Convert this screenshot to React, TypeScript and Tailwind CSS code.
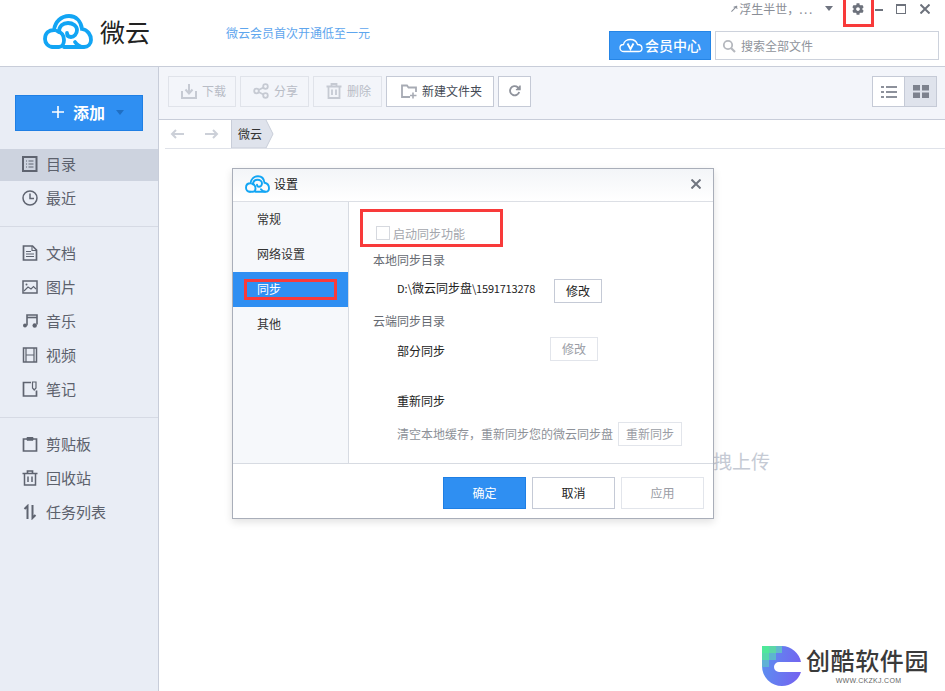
import React from "react";
import { FaCog } from "react-icons/fa";

function CloudLogo({ className, color = "#12a5f4" }: { className?: string; color?: string }) {
  return (
    <svg viewBox="0 0 50 35" className={className} fill="none" stroke={color} strokeWidth="3.8" strokeLinecap="round">
      <path d="M10 33C5 33 2 29 2 25C2 19 6 16 11 16C12 8 18 2 26 2C33 2 38 7 39 15C45 16 48 21 48 26C48 30 45 33 41 33C37 33 34 31 32 28" />
      <path d="M10 33H16C19 33 21 30 21 26C21 21 18 18 14 17" />
      <path d="M16 18C16 12 20 9 25 9C30 9 34 12 34 16C34 20 31 23 28 23C25 23 24 21 24 19" />
      <path d="M21 33H40" />
    </svg>
  );
}

function Glyph({ children, className = "w-4 h-4" }: { children: React.ReactNode; className?: string }) {
  return (
    <svg viewBox="0 0 16 16" className={className} fill="none" stroke="currentColor" strokeWidth="1.5">
      {children}
    </svg>
  );
}

const navIcons: Record<string, React.ReactNode> = {
  目录: (
    <Glyph>
      <rect x="1" y="1" width="13.5" height="14" strokeWidth="2" />
      <path d="M4 5h1M4 8h1M4 11h1M6.5 5h5M6.5 8h5M6.5 11h5" strokeWidth="1" />
    </Glyph>
  ),
  最近: (
    <Glyph>
      <circle cx="8" cy="8" r="7" />
      <path d="M8 3.5V8.5H12" />
    </Glyph>
  ),
  文档: (
    <Glyph>
      <path d="M1.5 1H10.5L14.5 5V15H1.5Z" strokeWidth="1.7" />
      <path d="M10 1V5.5H14.5M4 6.5h5M4 9h8M4 11.5h8" strokeWidth="1.1" />
    </Glyph>
  ),
  图片: (
    <Glyph>
      <rect x="1" y="2" width="14" height="12" />
      <circle cx="4.5" cy="5.5" r="1" fill="currentColor" stroke="none" />
      <path d="M2 12L6 8L9 10L11.5 7.5L14 10" strokeWidth="1.1" />
    </Glyph>
  ),
  音乐: (
    <Glyph>
      <path d="M5 12.5V2H15V11.5" strokeWidth="1.6" />
      <path d="M5 4.5H15" strokeWidth="1.6" />
      <circle cx="3" cy="12.5" r="2" fill="currentColor" stroke="none" />
      <circle cx="12.7" cy="12.5" r="2.2" fill="currentColor" stroke="none" />
    </Glyph>
  ),
  视频: (
    <Glyph>
      <rect x="1.5" y="1" width="13" height="14" />
      <path d="M4 1V15M12 1V15M4 8H12" strokeWidth="1.2" />
    </Glyph>
  ),
  笔记: (
    <Glyph>
      <path d="M9 1.5H1.5V15H14.5V9.5" strokeWidth="1.7" />
      <path d="M10.5 1H14V7L12.2 9L10.5 7Z" strokeWidth="1.2" />
    </Glyph>
  ),
  剪贴板: (
    <Glyph>
      <path d="M5 3H1.5V15H14.5V3H11" strokeWidth="1.7" />
      <path d="M5 4.2V1.5H11V4.2Z" fill="currentColor" strokeWidth="1" />
    </Glyph>
  ),
  回收站: (
    <Glyph>
      <path d="M0.5 3.5H15.5M5.5 3V1H10.5V3" strokeWidth="1.7" />
      <path d="M2.5 3.5V15H13.5V3.5M6 6.5V12M10 6.5V12" strokeWidth="1.5" />
    </Glyph>
  ),
  任务列表: (
    <Glyph>
      <path d="M5.5 15V2L2.5 5" strokeWidth="2" />
      <path d="M10.5 1V14L13.5 11" strokeWidth="2" />
    </Glyph>
  ),
};

function NavItem({ label, active }: { label: string; active?: boolean }) {
  return (
    <div className={`flex items-center pl-[22px] gap-[8px] text-[15px] text-[#5c616c] ${active ? "h-[32px] pb-[2px] bg-[#cdd3df]" : "h-[34px]"}`}>
      <span className="text-[#5f6470]">{navIcons[label]}</span>
      <span>{label}</span>
    </div>
  );
}

function ToolButton({ label, icon, width, enabled }: { label?: string; icon: React.ReactNode; width: string; enabled?: boolean }) {
  return (
    <div
      className={`${width} h-[31px] pb-[2px] flex items-center gap-[5px] text-[12px] border ${label ? "" : "justify-center"} ${
        enabled ? "bg-white border-[#c5cad6] text-[#444a55]" : "border-[#e0e3ea] text-[#b8bcc6]"
      }`}
    >
      {icon}
      {label && <span>{label}</span>}
    </div>
  );
}

function DialogButton({ children, kind, className = "" }: { children: React.ReactNode; kind: "primary" | "normal" | "disabled"; className?: string }) {
  const look = {
    primary: "bg-[#2f8ff2] border-[#1f7fe4] text-white",
    normal: "bg-white border-[#c5cad6] text-[#222222]",
    disabled: "bg-white border-[#e2e5eb] text-[#9a9da5]",
  }[kind];
  return <div className={`flex items-center justify-center border text-[12px] ${look} ${className}`}>{children}</div>;
}

function RedBox({ className }: { className: string }) {
  return <div className={`absolute border-[3px] border-[#f83a3a] pointer-events-none ${className}`} />;
}

export default function App() {
  return (
    <div className="relative w-screen h-screen overflow-hidden bg-white flex flex-col font-['Noto_Sans_CJK_SC','Noto_Sans',sans-serif]">
      {/* header */}
      <header className="h-[67px] shrink-0 flex border-b border-[#c8cdd9] pl-[43px] pr-[6px]">
        <div className="flex items-start pt-[14px]">
          <CloudLogo className="w-[50px] h-[35px]" />
          <span className="ml-[7px] -mt-[1px] text-[25px] leading-[37px] text-[#222222]">微云</span>
          <span className="ml-[76px] mt-[10px] text-[12px] leading-[18px] text-[#5ea6ee]">微云会员首次开通低至一元</span>
        </div>
        <div className="ml-auto w-[330px] flex flex-col">
          <div className="h-[31px] flex items-start justify-end pt-[3px] text-[#777c86]">
            <div className="h-[11px] flex items-center">
              <svg viewBox="0 0 8 8" className="w-[7px] h-[7px] mr-[1px]" fill="none" stroke="#8a8f99" strokeWidth="1.2">
                <path d="M0.5 7.5L7 1M3 2.5L6 1.5L7 4.5" />
              </svg>
              <span className="text-[12px] text-[#8a8e96] whitespace-nowrap">
                浮生半世，<span className="tracking-[1.6px]">...</span>
              </span>
              <svg viewBox="0 0 8 5" className="w-[8px] h-[5px] ml-[11px]" fill="#6f7480">
                <path d="M0 0H8L4 5Z" />
              </svg>
              <FaCog className="w-[12px] h-[12px] ml-[19px] text-[#6d727c]" />
              <div className="w-[8px] h-[2px] ml-[11px] mt-[2px] bg-[#6d727c]" />
              <div className="w-[10px] h-[10px] ml-[13px] border border-t-2 border-[#6d727c]" />
              <svg viewBox="0 0 10 10" className="w-[10px] h-[10px] ml-[14px] mr-[9px]" stroke="#6d727c" strokeWidth="2">
                <path d="M0.5 0.5L9.5 9.5M9.5 0.5L0.5 9.5" />
              </svg>
            </div>
          </div>
          <div className="flex gap-[4px]">
            <div className="w-[102px] h-[29px] flex items-center justify-center gap-[2px] bg-[#3a97f5] border border-[#2585e6] text-white text-[14px] font-medium">
              <svg viewBox="0 0 24 15" className="w-[24px] h-[15px]" fill="none" stroke="white" strokeWidth="1.3">
                <path d="M5 13.5C2.5 13.5 1 12 1 10C1 8 2.5 6.5 4.5 6.5C5 3.5 8 1.5 11.5 1.5C15 1.5 17.5 3.5 18.5 6.5C21 6.5 23 8 23 10.5C23 12.5 21.5 13.5 19.5 13.5Z" />
                <path d="M8.5 5.5L11.5 11L14.5 5.5" strokeWidth="1.8" />
              </svg>
              <span>会员中心</span>
            </div>
            <div className="w-[224px] h-[29px] flex items-center border border-[#cdd2dc] pl-[6px] gap-[5px] bg-white text-[12px] text-[#8f939b]">
              <svg viewBox="0 0 14 14" className="w-[14px] h-[14px]" fill="none" stroke="#b5b8be" strokeWidth="1.8">
                <circle cx="6" cy="6" r="4.2" />
                <path d="M9 9L13 13" strokeWidth="2.2" />
              </svg>
              <span>搜索全部文件</span>
            </div>
          </div>
        </div>
      </header>

      <div className="flex-1 flex min-h-0">
        {/* sidebar */}
        <aside className="w-[159px] shrink-0 bg-[#e9edf5] border-r border-[#c8cdd9] pt-[28px]">
          <div className="mx-[15px] w-[128px] h-[36px] pb-[2px] flex items-center bg-[#2f8ff2] border border-[#1f7fe4] text-white pl-[36px]">
            <svg viewBox="0 0 12 12" className="w-[12px] h-[12px]" stroke="white" strokeWidth="1.6">
              <path d="M6 0V12M0 6H12" />
            </svg>
            <span className="ml-[9px] text-[16px] font-bold leading-none">添加</span>
            <svg viewBox="0 0 8 5" className="w-[8px] h-[5px] ml-[11px]" fill="#1f6fc4">
              <path d="M0 0H8L4 5Z" />
            </svg>
          </div>
          <div className="mt-[18px]">
            <NavItem label="目录" active />
            <NavItem label="最近" />
          </div>
          <div className="mt-[11px] mb-[9px] h-px bg-[#d6dae4]" />
          <NavItem label="文档" />
          <NavItem label="图片" />
          <NavItem label="音乐" />
          <NavItem label="视频" />
          <NavItem label="笔记" />
          <div className="mt-[11px] mb-[9px] h-px bg-[#d6dae4]" />
          <NavItem label="剪贴板" />
          <NavItem label="回收站" />
          <NavItem label="任务列表" />
        </aside>

        {/* main */}
        <main className="flex-1 flex flex-col min-w-0">
          <div className="h-[53px] shrink-0 bg-[#f3f5fa] border-b border-[#c8cdd9] flex items-start pt-[9px] pl-[9px] pr-[8px] gap-[4px]">
            <ToolButton
              width="w-[68px] pl-[12px]"
              label="下载"
              icon={
                <svg viewBox="0 0 16 16" className="w-[16px] h-[16px]" fill="none" stroke="#c6cad3" strokeWidth="2">
                  <path d="M1 8V15H15V8" />
                  <path d="M8 1V10M4.5 6.5L8 10.5L11.5 6.5" />
                </svg>
              }
            />
            <ToolButton
              width="w-[69px] pl-[12px]"
              label="分享"
              icon={
                <svg viewBox="0 0 16 16" className="w-[16px] h-[16px]" fill="none" stroke="#c6cad3" strokeWidth="1.8">
                  <circle cx="3.5" cy="8" r="2.3" />
                  <circle cx="12.5" cy="3.5" r="2.3" />
                  <circle cx="12.5" cy="12.5" r="2.3" />
                  <path d="M5.5 7L10.5 4.5M5.5 9L10.5 11.5" />
                </svg>
              }
            />
            <ToolButton
              width="w-[69px] pl-[12px]"
              label="删除"
              icon={
                <svg viewBox="0 0 16 16" className="w-[16px] h-[16px]" fill="none" stroke="#c6cad3" strokeWidth="1.8">
                  <path d="M0.5 3.5H15.5M5.5 3V1H10.5V3" />
                  <path d="M2.5 3.5V15H13.5V3.5M6 6.5V12M10 6.5V12" />
                </svg>
              }
            />
            <ToolButton
              enabled
              width="w-[108px] pl-[14px]"
              label="新建文件夹"
              icon={
                <svg viewBox="0 0 16 16" className="w-[16px] h-[16px]" fill="none" stroke="#a7abb4" strokeWidth="1.8">
                  <path d="M9 14H1V2.5H6L7.5 4.5H15V9" />
                  <path d="M12 9.5V15.5M9 12.5H15.5" strokeWidth="1.6" />
                </svg>
              }
            />
            <ToolButton
              enabled
              width="w-[33px]"
              icon={
                <svg viewBox="0 0 14 14" className="w-[13px] h-[13px]" fill="none" stroke="#8f939c" strokeWidth="2">
                  <path d="M12 8.5A5 5 0 1 1 10.5 3.5L12.5 5.5" />
                  <path d="M13 1.5V6H8.5" strokeWidth="1.4" fill="#8f939c" />
                </svg>
              }
            />
            <div className="ml-auto w-[65px] h-[31px] flex border border-[#c5cad6]">
              <div className="flex-1 bg-white flex items-center justify-center border-r border-[#c5cad6]">
                <svg viewBox="0 0 16 12" className="w-[16px] h-[12px]" stroke="#8d919b" strokeWidth="2">
                  <path d="M0 1H3M5 1H16M0 6H3M5 6H16M0 11H3M5 11H16" />
                </svg>
              </div>
              <div className="flex-1 bg-[#dfe3ec] flex items-center justify-center">
                <svg viewBox="0 0 16 13" className="w-[16px] h-[13px]" fill="#7d828e">
                  <path d="M0 0H7V5.5H0ZM9 0H16V5.5H9ZM0 7.5H7V13H0ZM9 7.5H16V13H9Z" />
                </svg>
              </div>
            </div>
          </div>

          <div className="h-[29px] shrink-0 ml-[6px] flex items-stretch border-b border-[#dfe2e9]">
            <div className="w-[66px] flex items-center">
              <svg viewBox="0 0 14 10" className="w-[14px] h-[10px] ml-[5px]" fill="none" stroke="#ccd0d8" strokeWidth="2">
                <path d="M14 5H2M6 1L2 5L6 9" />
              </svg>
              <svg viewBox="0 0 14 10" className="w-[14px] h-[10px] ml-[21px]" fill="none" stroke="#ccd0d8" strokeWidth="2">
                <path d="M0 5H12M8 1L12 5L8 9" />
              </svg>
            </div>
            <div className="relative w-[43px] flex items-center pl-[7px] text-[12px] text-[#333333]">
              <svg viewBox="0 0 43 28" className="absolute left-0 top-0 w-[43px] h-[28px]" fill="#dfe3ec" stroke="#c8cdd9">
                <path d="M0.5 0V28H35L42 14L35 0" />
              </svg>
              <span className="relative">微云</span>
            </div>
          </div>

          <div className="flex-1 flex justify-end pr-[175px] pt-[299px] text-[19px] leading-[26px] text-[#c5cad4]">
            <span>拖拽上传</span>
          </div>
        </main>
      </div>

      {/* settings dialog */}
      <div className="absolute left-[232px] top-[168px] w-[482px] h-[351px] bg-white border border-[#a9aeb9] shadow-[0_3px_8px_rgba(0,0,0,0.12)] flex flex-col">
        <div className="h-[33px] pb-[2px] shrink-0 flex items-center pl-[12px] pr-[12px] border-b border-[#dcdfe5] bg-gradient-to-b from-[#f3f5f8] to-white">
          <CloudLogo className="w-[25px] h-[18px]" />
          <span className="ml-[4px] text-[12px] text-[#222222]">设置</span>
          <svg viewBox="0 0 10 10" className="w-[10px] h-[10px] ml-auto" stroke="#717680" strokeWidth="2">
            <path d="M0.5 0.5L9.5 9.5M9.5 0.5L0.5 9.5" />
          </svg>
        </div>
        <div className="h-[261px] shrink-0 flex">
          <div className="w-[116px] shrink-0 bg-[#f6f8fb] border-r border-[#d7dbe2] text-[12px] text-[#333333]">
            <div className="h-[35px] pb-[2px] flex items-center pl-[24px]">常规</div>
            <div className="h-[35px] pb-[2px] flex items-center pl-[24px]">网络设置</div>
            <div className="h-[35px] pb-[2px] flex items-center pl-[24px] bg-[#2f8ff2] text-white">同步</div>
            <div className="h-[35px] pb-[2px] flex items-center pl-[24px]">其他</div>
          </div>
          <div className="flex-1 pt-[21px] pl-[24px] text-[12px]">
            <div className="h-[20px] flex items-center pl-[3px] text-[#a3a6ad]">
              <div className="w-[14px] h-[14px] border border-[#d6d9df] mr-[2px]" />
              <span className="pl-px pt-[2px]">启动同步功能</span>
            </div>
            <div className="mt-[7px] h-[20px] flex items-center text-[#666a72]">本地同步目录</div>
            <div className="mt-[9px] h-[24px] flex items-start pl-[24px]">
              <span className="w-[157px] h-[18px] leading-[18px] text-[#222222]">
                <span className="text-[11px]">D:\</span>微云同步盘<span className="text-[11px] tracking-[-0.2px]">\1591713278</span>
              </span>
              <DialogButton kind="normal" className="w-[48px] h-[24px]">修改</DialogButton>
            </div>
            <div className="mt-[8px] h-[20px] flex items-center text-[#666a72]">云端同步目录</div>
            <div className="mt-[6px] h-[24px] flex items-start pl-[24px]">
              <span className="w-[153px] mt-[5px] leading-[18px] text-[#222222]">部分同步</span>
              <DialogButton kind="disabled" className="w-[48px] h-[24px]">修改</DialogButton>
            </div>
            <div className="mt-[30px] h-[20px] flex items-center pl-[24px] text-[#222222]">重新同步</div>
            <div className="mt-[11px] h-[24px] flex items-center pl-[24px] text-[#8d9198]">
              <span className="w-[221px]">清空本地缓存，重新同步您的微云同步盘</span>
              <DialogButton kind="disabled" className="w-[64px] h-[24px] text-[#7b7f87]">重新同步</DialogButton>
            </div>
          </div>
        </div>
        <div className="flex-1 border-t border-[#d7dbe2] flex justify-end gap-[6px] pt-[13px] pr-[9px]">
          <DialogButton kind="primary" className="w-[83px] h-[32px]">确定</DialogButton>
          <DialogButton kind="normal" className="w-[83px] h-[32px]">取消</DialogButton>
          <DialogButton kind="disabled" className="w-[83px] h-[32px]">应用</DialogButton>
        </div>
      </div>

      {/* annotations */}
      <RedBox className="left-[843px] -top-[3px] w-[31px] h-[30px]" />
      <RedBox className="left-[360px] top-[209px] w-[143px] h-[38px]" />
      <RedBox className="left-[244px] top-[279px] w-[93px] h-[21px]" />

      {/* watermark */}
      <div className="absolute left-[762px] top-[646px] flex items-start">
        <svg viewBox="0 0 40 40" className="w-[40px] h-[40px]">
          <defs>
            <linearGradient id="wm" x1="0" y1="0.3" x2="1" y2="0.5">
              <stop offset="0" stopColor="#5b90f0" />
              <stop offset="1" stopColor="#7463f0" />
            </linearGradient>
          </defs>
          <path d="M0 0H20A20 20 0 0 1 39 16H17A4.5 4.5 0 0 0 17 26H39A20 20 0 0 1 20 40A20 20 0 0 1 0 20Z" fill="url(#wm)" />
          <rect x="0" y="0" width="7" height="7" fill="#4fe89a" />
          <rect x="7" y="0" width="7" height="7" fill="#5cd6a8" />
          <rect x="14" y="0" width="6" height="7" fill="#62b9cd" />
          <rect x="0" y="7" width="7" height="7" fill="#56d8aa" />
          <rect x="7" y="7" width="7" height="7" fill="#5db5cf" />
          <rect x="0" y="14" width="7" height="7" fill="#5fb2d6" />
        </svg>
        <div className="ml-[4px] flex flex-col items-center">
          <span className="text-[24px] leading-[28px] font-medium text-[#3a3a3a] tracking-[0.6px] whitespace-nowrap">创酷软件园</span>
          <span className="mt-[2px] ml-[2px] text-[7px] leading-[9px] text-[#666666] tracking-[0.3px] font-['Liberation_Sans',sans-serif]">WWW.CKZKJ.COM</span>
        </div>
      </div>
    </div>
  );
}
